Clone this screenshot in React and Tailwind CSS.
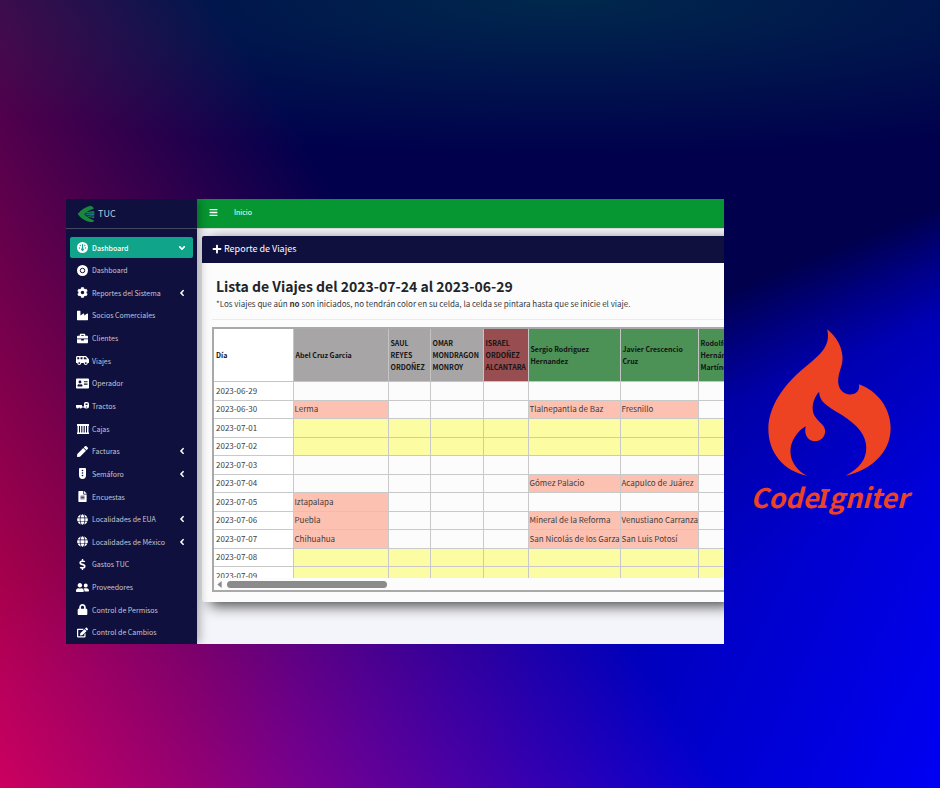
import {
  FaCog,
  FaIndustry,
  FaBriefcase,
  FaAddressCard,
  FaPen,
  FaFileAlt,
  FaGlobe,
  FaDollarSign,
  FaUserFriends,
  FaLock,
  FaEdit,
  FaAngleDown,
  FaAngleLeft,
  FaBars,
  FaPlus,
} from "react-icons/fa";
import { FaVanShuttle } from "react-icons/fa6";

function GaugeIcon() {
  return (
    <svg viewBox="0 0 22 22" className="size-[11px]" aria-hidden="true">
      <circle cx="11" cy="11" r="11" fill="currentColor" />
      <g fill="#10a58b">
        <path d="M10.200 4h1.600l.6 8.500a2.800 2.800 0 1 1-2.800 0z" />
        <circle cx="5" cy="12" r="1.400" />
        <circle cx="6.500" cy="7" r="1.400" />
        <circle cx="15.500" cy="7" r="1.400" />
        <circle cx="17" cy="12" r="1.400" />
      </g>
    </svg>
  );
}

function DiscIcon() {
  return (
    <svg viewBox="0 0 22 22" className="size-[11px]" fill="none" aria-hidden="true">
      <circle cx="11" cy="11" r="11" fill="currentColor" />
      <circle cx="11" cy="11" r="4.500" stroke="#10103f" strokeWidth="2" />
    </svg>
  );
}

function TractorIcon() {
  return (
    <svg viewBox="0 0 26 14" className="h-[7px] w-[13px]" fill="currentColor" aria-hidden="true">
      <path d="M0 6h12v3h4V3q0-3 3-3h3q4 0 4 4v5q0 4-4 4h-2q-3 0-4-2h-4q-1 2-3 2t-2-2H6q-1 2-3 2t-3-3z" />
      <path d="M19 3h4v3h-4z" fill="#10103f" />
      <circle cx="21" cy="10" r="1.200" fill="#10103f" />
    </svg>
  );
}

function ContainerIcon() {
  return (
    <svg viewBox="0 0 24 20" className="h-[10px] w-[12px]" fill="currentColor" aria-hidden="true">
      <path d="M0 0h24v4H0zM0 17h24v3H0zM1 2h3v16H1zM6 2h2.500v16H6zM10.700 2h2.600v16h-2.600zM15.500 2H18v16h-2.500zM20 2h3v16h-3z" />
    </svg>
  );
}

function SignalIcon() {
  return (
    <svg viewBox="0 0 14 22" className="h-[11px] w-[7px]" aria-hidden="true">
      <path d="M0 2q0-2 2-2h10q2 0 2 2v12q0 8-7 8t-7-8z" fill="currentColor" />
      <g fill="#10103f">
        <circle cx="7" cy="5" r="1.600" />
        <circle cx="7" cy="10" r="1.600" />
        <circle cx="7" cy="15" r="1.600" />
      </g>
    </svg>
  );
}

function TucLogo() {
  return (
    <svg viewBox="48 26 56 54" className="size-[18px]" aria-hidden="true">
      <path d="M50 53Q66 32 90 27q8 1 11 9-18 6-31 17 12 14 32 20-3 5-9 6Q64 74 50 53z" fill="#17883c" />
      <path d="M68 53q14-10 34-8v5q-18-2-34 3z" fill="#1d8a58" />
      <path d="M70 53q16-4 32-2v7q-18 2-32-5z" fill="#1d6f8c" />
      <path d="M74 57q14 5 28 3l-1 6q-16-1-27-9z" fill="#17883c" />
    </svg>
  );
}

const menu = [
  { label: "Dashboard", icon: GaugeIcon, active: true },
  { label: "Dashboard", icon: DiscIcon },
  { label: "Reportes del Sistema", icon: FaCog, nested: true },
  { label: "Socios Comerciales", icon: FaIndustry },
  { label: "Clientes", icon: FaBriefcase },
  { label: "Viajes", icon: FaVanShuttle, wide: true },
  { label: "Operador", icon: FaAddressCard, wide: true },
  { label: "Tractos", icon: TractorIcon },
  { label: "Cajas", icon: ContainerIcon },
  { label: "Facturas", icon: FaPen, nested: true },
  { label: "Semáforo", icon: SignalIcon, nested: true },
  { label: "Encuestas", icon: FaFileAlt },
  { label: "Localidades de EUA", icon: FaGlobe, nested: true },
  { label: "Localidades de México", icon: FaGlobe, nested: true },
  { label: "Gastos TUC", icon: FaDollarSign },
  { label: "Proveedores", icon: FaUserFriends, wide: true },
  { label: "Control de Permisos", icon: FaLock },
  { label: "Control de Cambios", icon: FaEdit },
];

function Sidebar() {
  return (
    <aside className="z-10 flex w-[131px] shrink-0 flex-col bg-[#10103f] text-[7px] text-[#c5c7d6] shadow-[2px_0_10px_rgba(0,0,0,0.35)]">
      <a href="#inicio" className="flex h-[30px] items-center gap-[3px] border-b border-[#45465f] pl-[11px] text-[9px]">
        <TucLogo />
        TUC
      </a>
      <nav className="flex flex-1 flex-col justify-between px-1 pt-2 pb-px">
        {menu.map(({ label, icon: Icon, active, nested, wide }, i) => (
          <a
            key={i}
            href="#menu"
            className={
              active
                ? "flex h-[21px] items-center rounded-xs bg-[#10a58b] px-[6px] font-medium text-white"
                : "flex h-[21px] items-center px-[6px]"
            }
          >
            <span className="flex w-[13px] justify-center text-white">
              <Icon className={wide ? "size-[13px]" : "size-[11px]"} />
            </span>
            <span className="flex-1 pl-[3px] whitespace-nowrap">{label}</span>
            {active && <FaAngleDown className="size-[10px]" />}
            {nested && <FaAngleLeft className="size-[10px] text-white" />}
          </a>
        ))}
      </nav>
    </aside>
  );
}

const columns = [
  { name: "Día", head: "bg-white" },
  { name: "Abel Cruz Garcia", head: "bg-[#a7a5a6]" },
  { name: "SAUL\nREYES\nORDOÑEZ", head: "bg-[#a7a5a6]" },
  { name: "OMAR\nMONDRAGON\nMONROY", head: "bg-[#a7a5a6]" },
  { name: "ISRAEL\nORDOÑEZ\nALCANTARA", head: "bg-[#984e50]" },
  { name: "Sergio Rodriguez\nHernandez", head: "bg-[#4c9156]" },
  { name: "Javier Crescencio\nCruz", head: "bg-[#4c9156]" },
  { name: "Rodolfo\nHernández\nMartínez", head: "bg-[#4c9156]" },
];

const rows = [
  { day: "2023-06-29", trips: {} },
  { day: "2023-06-30", trips: { 1: "Lerma", 5: "Tlalnepantla de Baz", 6: "Fresnillo" } },
  { day: "2023-07-01", weekend: true, trips: {} },
  { day: "2023-07-02", weekend: true, trips: {} },
  { day: "2023-07-03", trips: {} },
  { day: "2023-07-04", trips: { 5: "Gómez Palacio", 6: "Acapulco de Juárez" } },
  { day: "2023-07-05", trips: { 1: "Iztapalapa" } },
  { day: "2023-07-06", trips: { 1: "Puebla", 5: "Mineral de la Reforma", 6: "Venustiano Carranza" } },
  { day: "2023-07-07", trips: { 1: "Chihuahua", 5: "San Nicolás de los Garza", 6: "San Luis Potosí" } },
  { day: "2023-07-08", weekend: true, trips: {} },
  { day: "2023-07-09", weekend: true, trips: {} },
];

function cellColor(row, i) {
  if (row.trips[i]) return "bg-[#fcc1b0]";
  return row.weekend ? "bg-[#fcfca2]" : "bg-[#fcfcfc]";
}

function TripsTable() {
  return (
    <div className="border-2 border-r-0 border-[#a9a9a9]">
      <div className="h-[249px] overflow-hidden">
        <table className="w-[565px] table-fixed border-collapse text-left text-[#3d3d42]">
          <colgroup>
            <col className="w-[79px]" />
            <col className="w-[95px]" />
            <col className="w-[42px]" />
            <col className="w-[53px]" />
            <col className="w-[45px]" />
            <col className="w-[92px]" />
            <col className="w-[78px]" />
            <col className="w-[81px]" />
          </colgroup>
          <thead>
            <tr className="h-[52px]">
              {columns.map((c) => (
                <th
                  key={c.name}
                  scope="col"
                  className={`border-r border-b border-[#c4c4c4] pl-[2px] text-[7px] leading-[12px] font-bold whitespace-pre-line text-[#141414] ${c.head}`}
                >
                  {c.name}
                </th>
              ))}
            </tr>
          </thead>
          <tbody>
            {rows.map((row) => (
              <tr key={row.day} className="h-[18px] odd:h-[19px]">
                <th scope="row" className="border-r border-b border-[#c9c9c9] bg-white pl-[2px] font-normal">
                  {row.day}
                </th>
                {columns.slice(1).map((c, i) => (
                  <td
                    key={c.name}
                    className={`border-r border-b border-[#c9c9c9] pl-px whitespace-nowrap ${cellColor(row, i + 1)}`}
                  >
                    {row.trips[i + 1]}
                  </td>
                ))}
              </tr>
            ))}
          </tbody>
        </table>
      </div>
      <div className="flex h-[12px] items-center gap-[5px] pl-[3px]">
        <svg viewBox="0 0 5 8" className="h-[7px] w-[5px]" fill="#8b8b8b" aria-hidden="true">
          <path d="M5 0v8L0 4z" />
        </svg>
        <div className="h-[7px] w-[160px] rounded-full bg-[#8b8b8b]" />
      </div>
    </div>
  );
}

function Main() {
  return (
    <div className="flex min-w-0 flex-1 flex-col bg-[#f4f5fa]">
      <header className="flex h-[30px] items-center gap-4 border-b border-[#d5dad9] bg-[#069732] pb-[3px] pl-[12px] text-[7px] text-white">
        <button type="button" aria-label="Menú">
          <FaBars className="size-[9px]" />
        </button>
        <a href="#inicio">Inicio</a>
      </header>
      <main className="overflow-hidden pt-[7px] pb-[42px] pl-[5px]">
        <section className="rounded-l-xs bg-[#fcfcfc] shadow-[8px_4px_14px_rgba(0,0,0,0.7)]">
          <h1 className="flex h-[27px] items-center gap-[2px] rounded-tl-xs bg-[#10103f] pb-[2px] pl-[10px] text-[9px] text-white">
            <FaPlus className="size-[10px]" />
            Reporte de Viajes
          </h1>
          <div className="pt-3 pb-[10px] pl-[10px]">
            <h2 className="pl-1 text-[14px] leading-[22px] font-bold whitespace-nowrap text-[#212529]">
              Lista de Viajes del 2023-07-24 al 2023-06-29
            </h2>
            <p className="pl-1 leading-[14px] whitespace-nowrap text-[#35383c]">
              *Los viajes que aún <b>no</b> son iniciados, no tendrán color en su celda, la celda se pintara hasta que
              se inicie el viaje.
            </p>
            <hr className="mt-2 mb-[7px] border-[#ececec]" />
            <TripsTable />
          </div>
        </section>
      </main>
    </div>
  );
}

function CodeIgniterLogo() {
  return (
    <div className="flex w-[216px] shrink-0 flex-col items-center pt-[130px] pr-[5px] text-[#ee4323]">
      <svg viewBox="85 26 368 440" className="h-[147px] w-[123px]" fill="currentColor" role="img" aria-label="CodeIgniter">
        <path d="M262 27C290 50 306 78 308 110C309 140 294 155 295 185C296 208 312 222 330 222C350 221 361 208 357 191C415 212 452 265 452 322C452 395 395 447 317 465C360 443 380 415 379 380C378 345 355 315 305 283C262 257 238 244 238 214C218 235 213 268 225 287C238 308 255 310 256 333C255 350 243 362 226 362C207 362 191 345 198 317C172 332 152 362 152 392C152 425 175 453 202 465C130 450 86 395 86 325C86 260 130 195 190 145C235 108 275 80 262 27Z" />
      </svg>
      <span className="text-[27px] leading-[42px] font-bold italic">
        Code<span className="font-['Noto_Sans',sans-serif]">I</span>gniter
      </span>
    </div>
  );
}

export default function App() {
  return (
    <div className="flex min-h-screen items-start bg-black bg-[linear-gradient(237deg,#000_50%,#cc0000_100%),radial-gradient(ellipse_85%_20%_at_60%_0%,#002800,#000),linear-gradient(#00004c,#00004c),linear-gradient(to_right,#000026_0%,#000048_21%,#000073_32%,#00009e_53%,#0000d1_75%,#0000ff_100%),linear-gradient(158deg,#000_50%,#000055_55%,#00009b_60%,#0000b9_68%,#0000d0_75%,#0000f0_100%)] [background-blend-mode:screen,screen,screen,multiply,normal] pt-[199px] pb-36 pl-[66px] font-['Noto_Sans_CJK_SC',sans-serif] text-[8px] leading-[12px]">
      <div className="flex min-w-0 flex-1 overflow-hidden">
        <Sidebar />
        <Main />
      </div>
      <CodeIgniterLogo />
    </div>
  );
}
